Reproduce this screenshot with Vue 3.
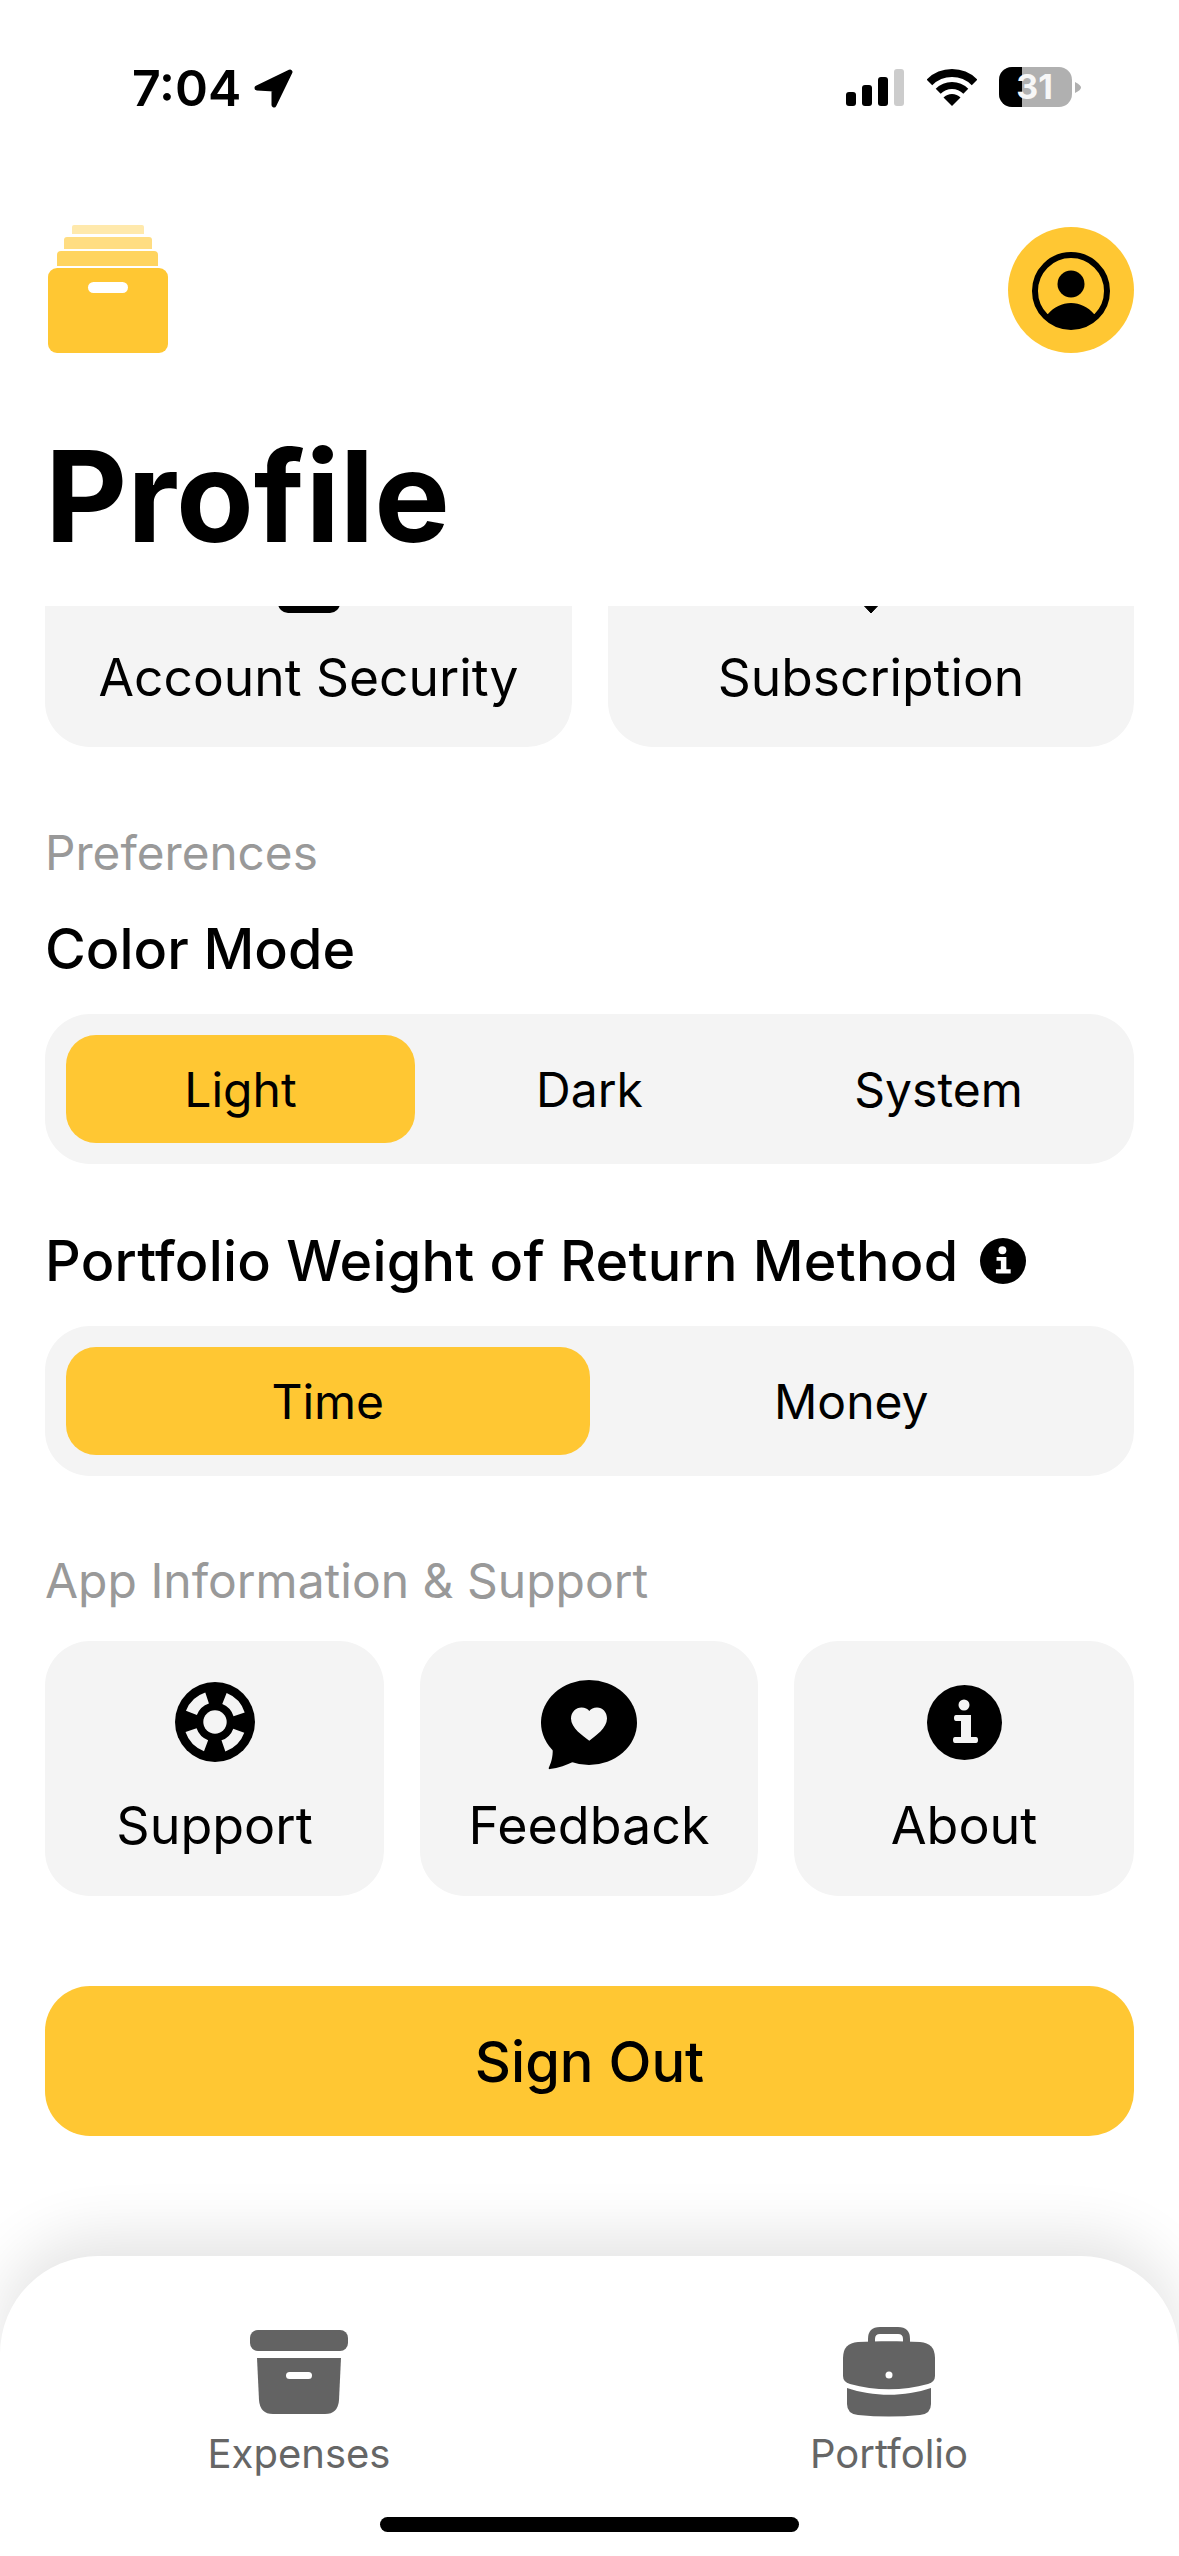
<script setup>
const prefs = [
  { label: 'Light', on: true },
  { label: 'Dark', on: false },
  { label: 'System', on: false },
]
const methods = [
  { label: 'Time', on: true },
  { label: 'Money', on: false },
]
</script>

<template>
  <div class="phone">
    <div class="status">
      <div class="status-left">
        <span class="time">7:04</span>
        <svg class="arrow" width="39" height="39" viewBox="0 0 39 39"><path d="M3 19 L36 3 L20 36 L20 20 Z" fill="#000" stroke="#000" stroke-width="5" stroke-linejoin="round"/></svg>
      </div>
      <div class="status-right">
        <svg width="58" height="37" viewBox="0 0 58 37">
          <rect x="0" y="23" width="10" height="14" rx="3" fill="#000"/>
          <rect x="16" y="16" width="10" height="21" rx="3" fill="#000"/>
          <rect x="32" y="8" width="10" height="29" rx="3" fill="#000"/>
          <rect x="48" y="0" width="10" height="37" rx="3" fill="#ccc"/>
        </svg>
        <svg class="wifi" width="50" height="37" viewBox="0 0 50 37">
          <path d="M2.4 13.4 A32 32 0 0 1 47.6 13.4" fill="none" stroke="#000" stroke-width="8"/>
          <path d="M11.2 22.2 A19.5 19.5 0 0 1 38.8 22.2" fill="none" stroke="#000" stroke-width="7"/>
          <path d="M25 37 L16.5 28.5 A12 12 0 0 1 33.5 28.5 Z" fill="#000"/>
        </svg>
        <div class="battery">
          <div class="battery-body">
            <div class="battery-fill"></div>
            <span class="battery-num">31</span>
          </div>
          <svg class="battery-nub" width="6" height="11" viewBox="0 0 6 11"><path d="M0 0 Q6 3 6 5.500 Q6 8 0 11 Z" fill="#b0b0b0"/></svg>
        </div>
      </div>
    </div>

    <header class="head">
      <svg width="126" height="130" viewBox="0 0 126 130">
        <path d="M29 0 H97 Q99 0 99 2 V9 H27 V2 Q27 0 29 0 Z" fill="#ffe9ac"/>
        <path d="M22 12 H104 Q107 12 107 15 V24 H19 V15 Q19 12 22 12 Z" fill="#ffdd82"/>
        <path d="M16 26 H109 Q113 26 113 30 V41 H12 V30 Q12 26 16 26 Z" fill="#ffd45f"/>
        <rect x="3" y="43" width="120" height="85" rx="9" fill="#ffc733"/>
        <rect x="43" y="57" width="40" height="11" rx="5.5" fill="#fff"/>
      </svg>
      <div class="avatar">
        <svg width="126" height="126" viewBox="0 0 126 126">
          <circle cx="63" cy="64" r="36" fill="none" stroke="#000" stroke-width="6"/>
          <circle cx="63" cy="57" r="13.5" fill="#000"/>
          <path d="M36 87 L40 87 C46 80 54 76 63 76 C72 76 80 80 86 87 L90 87 A36 36 0 0 1 36 87 Z" fill="#000"/>
        </svg>
      </div>
    </header>

    <h1 class="title">Profile</h1>

    <main class="scroll">
      <div class="two-cards">
        <div class="card">
          <div class="card-icon">
            <svg width="62" height="73" viewBox="0 0 62 73"><rect x="0" y="30" width="62" height="43" rx="10" fill="#000"/><path d="M14 32 V20 A17 17 0 0 1 48 20 V32" fill="none" stroke="#000" stroke-width="7"/></svg>
          </div>
          <span class="card-label">Account Security</span>
        </div>
        <div class="card">
          <div class="card-icon">
            <svg width="62" height="73" viewBox="0 0 62 73"><path d="M31 73 L0 40 V8 H62 V40 Z" fill="#000" stroke="#000" stroke-linejoin="round"/></svg>
          </div>
          <span class="card-label">Subscription</span>
        </div>
      </div>

      <p class="section first">Preferences</p>
      <p class="field">Color Mode</p>
      <div class="segment three">
        <div v-for="p in prefs" :key="p.label" class="seg" :class="{ on: p.on }">{{ p.label }}</div>
      </div>

      <div class="field with-icon">
        <span>Portfolio Weight of Return Method</span>
        <svg width="46" height="46" viewBox="0 0 75 75">
          <circle cx="37.5" cy="37.5" r="37.5" fill="#000"/>
          <circle cx="36.5" cy="20" r="6.5" fill="#fff"/>
          <path d="M27 31 H43 V51 H50 V58 H26 V51 H34 V37 H27 Z" fill="#fff"/>
        </svg>
      </div>
      <div class="segment two">
        <div v-for="m in methods" :key="m.label" class="seg" :class="{ on: m.on }">{{ m.label }}</div>
      </div>

      <p class="section second">App Information &amp; Support</p>
      <div class="three-cards">
        <div class="card small">
          <div class="card-icon">
            <svg width="80" height="80" viewBox="0 0 80 80">
              <circle cx="40" cy="40" r="40" fill="#000"/>
              <circle cx="40" cy="40" r="25.3" fill="none" stroke="#f4f4f4" stroke-width="11.7" stroke-dasharray="22.08 17.67" stroke-dashoffset="-8.83"/>
              <circle cx="40" cy="40" r="11.7" fill="#f4f4f4"/>
            </svg>
          </div>
          <span class="card-label">Support</span>
        </div>
        <div class="card small">
          <div class="card-icon">
            <svg class="bubble" width="96" height="90" viewBox="0 0 96 90">
              <ellipse cx="48" cy="42.500" rx="48" ry="42.500" fill="#000"/>
              <path d="M11.700 69 C12 77 10 83 7.700 88 Q7.500 89.500 9 89 C17 88 26 85 34 81 Z" fill="#000"/>
              <path d="M48.300 60.700 C42 56 30 48 30 38.500 C30 32 35 27.500 40.500 27.500 C44 27.500 46.800 29 48.300 31 C50 29 52.500 27.500 56 27.500 C61.500 27.500 66 32 66 38.500 C66 48 54.500 56 48.300 60.700 Z" fill="#f4f4f4"/>
            </svg>
          </div>
          <span class="card-label">Feedback</span>
        </div>
        <div class="card small">
          <div class="card-icon">
            <svg width="75" height="75" viewBox="0 0 75 75">
              <circle cx="37.5" cy="37.5" r="37.5" fill="#000"/>
              <circle cx="37" cy="20" r="5.500" fill="#f4f4f4"/>
              <path d="M29 30 H44 V52 H49 Q51 52 51 55 Q51 58 49 58 H28 Q26 58 26 55 Q26 52 28 52 H34 V36 H29 Q27 36 27 33 Q27 30 29 30 Z" fill="#f4f4f4"/>
            </svg>
          </div>
          <span class="card-label">About</span>
        </div>
      </div>

      <button class="signout">Sign Out</button>
    </main>

    <nav class="tabbar">
      <div class="tab">
        <div class="tab-icon">
          <svg width="98" height="84" viewBox="0 0 98 84">
            <rect x="0" y="0" width="98" height="21" rx="8" fill="#636363"/>
            <path d="M7 28 H91 L89 70 Q88 84 75 84 H23 Q10 84 9 70 Z" fill="#636363"/>
            <rect x="36" y="42" width="26" height="7" rx="3.5" fill="#fff"/>
          </svg>
        </div>
        <span>Expenses</span>
      </div>
      <div class="tab">
        <div class="tab-icon">
          <svg width="92" height="92" viewBox="0 0 92 92">
            <path d="M28.500 18 V13 Q28.500 4.500 37 4.500 H55 Q63.500 4.500 63.500 13 V18" fill="none" stroke="#636363" stroke-width="7"/>
            <path d="M15 16 C35 15 57 15 77 16 Q92 17 92 32 V50 Q92 56 85 58 C60 65 32 65 7 58 Q0 56 0 50 V32 Q0 17 15 16 Z" fill="#636363"/>
            <path d="M4 62 C30 71 62 71 88 62 V78 Q88 88 77 89 Q46 92 15 89 Q4 88 4 78 Z" fill="#636363"/>
            <circle cx="46" cy="49" r="3.500" fill="#fff"/>
          </svg>
        </div>
        <span>Portfolio</span>
      </div>
      <div class="home-bar"></div>
    </nav>
  </div>
</template>

<style>
html, body { margin: 0; background: #fff; }
</style>

<style scoped>
.phone {
  width: 1179px;
  height: 2556px;
  background: #fff;
  display: flex;
  flex-direction: column;
  overflow: hidden;
  font-family: Inter, "Noto Sans", sans-serif;
  color: #000;
}
.status {
  height: 120px;
  box-sizing: border-box;
  padding: 67px 98px 0 132px;
  display: flex;
  justify-content: space-between;
  align-items: flex-start;
}
.status-left { display: flex; align-items: center; gap: 13px; }
.time { font-size: 50px; font-weight: 600; line-height: 42px; }
.status-right { display: flex; align-items: flex-start; padding-top: 2px; }
.wifi { margin-left: 23px; }
.battery { display: flex; align-items: center; margin-left: 22px; margin-top: -2px; }
.battery-body {
  position: relative;
  width: 73px;
  height: 40px;
  box-sizing: border-box;
  padding-right: 2px;
  border-radius: 13px;
  background: #b0b0b0;
  display: flex;
  align-items: center;
  justify-content: center;
}
.battery-fill { position: absolute; left: 0; top: 0; bottom: 0; width: 23px; background: #000; border-radius: 13px 0 0 13px; }
.battery-num { position: relative; color: #f7f7f7; font-size: 34px; font-weight: 700; line-height: 40px; }
.battery-nub { margin-left: 3px; }

.head {
  height: 233px;
  box-sizing: border-box;
  padding: 105px 45px 0;
  display: flex;
  justify-content: space-between;
  align-items: flex-start;
}
.avatar {
  width: 126px;
  height: 126px;
  margin-top: 2px;
  border-radius: 50%;
  background: #ffc733;
}
.title {
  margin: 78px 0 45px 45px;
  font-size: 127px;
  line-height: 130px;
  font-weight: 700;
}
.scroll { flex: 1; min-height: 0; overflow: hidden; padding: 0 45px; }
.two-cards {
  margin-top: -115px;
  display: grid;
  grid-template-columns: 527px 526px;
  gap: 36px;
}
.three-cards {
  margin-top: 30px;
  display: grid;
  grid-template-columns: 339px 338px 340px;
  gap: 36px;
}
.card {
  height: 256px;
  box-sizing: border-box;
  padding-top: 37px;
  background: #f4f4f4;
  border-radius: 45px;
  display: flex;
  flex-direction: column;
  align-items: center;
}
.small { height: 255px; padding-top: 36px; }
.card-icon { height: 90px; display: flex; align-items: center; justify-content: center; }
.bubble { margin-top: 5px; }
.card-label { margin-top: 27px; font-size: 52px; line-height: 64px; }
.two-cards .card { padding-top: 40px; }
.two-cards .card-icon { height: 82px; align-items: flex-end; }
.two-cards .card-label { margin-top: 32px; font-size: 51.5px; }
.section { margin: 0; font-size: 47.7px; line-height: 60px; color: #999; }
.section.first { margin-top: 76px; }
.section.second { margin-top: 75px; font-size: 48px; }
.field { margin: 33px 0 32px; font-size: 55.7px; line-height: 66px; font-weight: 500; }
.with-icon { margin-top: 64px; display: flex; align-items: center; gap: 22px; letter-spacing: 0.25px; }
.segment {
  box-sizing: border-box;
  height: 150px;
  padding: 21px;
  background: #f4f4f4;
  border-radius: 45px;
  display: grid;
}
.segment.three { grid-template-columns: repeat(3, 1fr); }
.segment.two { grid-template-columns: repeat(2, 1fr); }
.seg {
  height: 108px;
  border-radius: 30px;
  display: flex;
  align-items: center;
  justify-content: center;
  font-size: 48px;
}
.seg.on { background: #ffc733; }
.signout {
  display: block;
  width: 100%;
  height: 150px;
  margin-top: 90px;
  padding: 2px 0 0;
  border: 0;
  border-radius: 45px;
  background: #ffc733;
  color: #000;
  font-family: inherit;
  font-size: 56px;
  font-weight: 500;
}
.tabbar {
  position: relative;
  z-index: 1;
  height: 300px;
  box-sizing: border-box;
  padding: 70px 0 0 4px;
  background: #fff;
  border-radius: 98px 98px 0 0;
  box-shadow: 0 -20px 60px rgba(0, 0, 0, 0.11);
  display: grid;
  grid-template-columns: 590px 590px;
  align-items: start;
}
.tab {
  display: flex;
  flex-direction: column;
  align-items: center;
  color: #666;
  font-size: 40px;
  line-height: 48px;
}
.tab-icon { height: 92px; margin-bottom: 12px; display: flex; align-items: center; justify-content: center; }
.home-bar {
  position: absolute;
  left: 380px;
  top: 261px;
  width: 419px;
  height: 15px;
  border-radius: 8px;
  background: #000;
}
</style>
